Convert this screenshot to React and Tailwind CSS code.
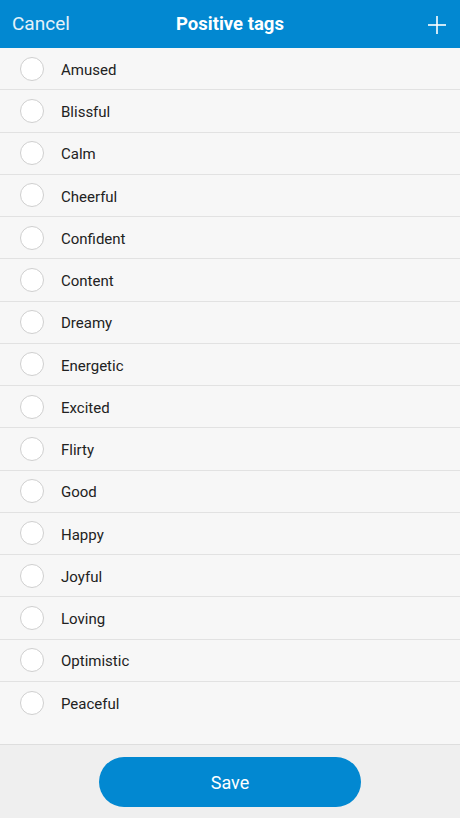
const tags = [
    'Amused', 'Blissful', 'Calm', 'Cheerful', 'Confident', 'Content', 'Dreamy', 'Energetic',
    'Excited', 'Flirty', 'Good', 'Happy', 'Joyful', 'Loving', 'Optimistic', 'Peaceful'
];

const App = () => {
    return (
        <div className="w-[460px] h-[818px] flex flex-col bg-[#f7f7f7] font-['Roboto',sans-serif]">
            <div className="h-[48px] shrink-0 bg-[#0288d1] flex items-center justify-between px-3 pt-[1px] text-white">
                <span className="text-[19px] font-normal text-[#e4f2fa] w-[80px]">Cancel</span>
                <span className="text-[18.5px] font-bold">Positive tags</span>
                <div className="w-[80px] flex justify-end pr-[1px]">
                    <svg width="20" height="20" viewBox="0 0 20 20" fill="none" stroke="currentColor" strokeWidth="1.6">
                        <line x1="10" y1="1" x2="10" y2="19" />
                        <line x1="1" y1="10" x2="19" y2="10" />
                    </svg>
                </div>
            </div>

            <div className="flex-1 flex flex-col">
                {tags.map((tag, idx) => (
                    <div
                        key={tag}
                        className={`h-[42.25px] shrink-0 flex items-center ${idx < tags.length - 1 ? 'border-b border-[#e2e2e2]' : ''}`}
                    >
                        <div className="ml-5 w-6 h-6 rounded-full bg-white border border-[#cfcfcf]"></div>
                        <span className="ml-[17px] pt-[3px] text-[15px] text-[#222]">{tag}</span>
                    </div>
                ))}
            </div>

            <div className="h-[74px] shrink-0 bg-[#efefef] border-t border-[#dedede] flex items-center justify-center">
                <button className="w-[262px] h-[50px] rounded-full bg-[#0288d1] text-white text-[18px] pt-[1px]">
                    Save
                </button>
            </div>
        </div>
    );
};

export default App;
